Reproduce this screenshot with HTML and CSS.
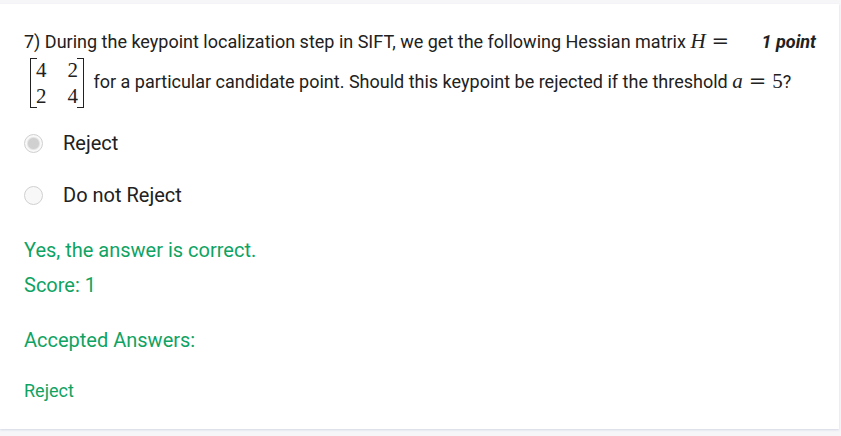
FILE: index.html
```html
<!DOCTYPE html>
<html lang="en">
<head>
<meta charset="utf-8">
<title>Assessment question</title>
<link rel="stylesheet" href="styles.css">
</head>
<body>
<main class="card">
  <form>
    <fieldset class="question">
      <legend class="prompt">
        <span class="points">1 point</span>
        7) During the keypoint localization step in SIFT, we get the following Hessian matrix <span class="math"><i>H</i><span class="equals">=</span></span><br>
        <span class="matrix"><span>4</span><span>2</span><span>2</span><span>4</span></span>
        <span>for a particular candidate point. Should this keypoint be rejected if the threshold <span class="math"><i>a</i><span class="equals">=</span>5</span>?</span>
      </legend>
      <label class="choice"><input type="radio" name="answer" checked disabled><span>Reject</span></label>
      <label class="choice"><input type="radio" name="answer" disabled><span>Do not Reject</span></label>
    </fieldset>
  </form>
  <section class="feedback">
    <p>Yes, the answer is correct.</p>
    <p>Score: 1</p>
    <h2>Accepted Answers:</h2>
    <p class="accepted">Reject</p>
  </section>
</main>
</body>
</html>
```
FILE: styles.css
```css
* {
  box-sizing: border-box;
}

body {
  margin: 0;
  padding: 4px 2px 6px 0;
  background: #f6f6f9;
  color: #212121;
  font-family: Roboto, sans-serif;
  font-size: 18px;
}

.card {
  padding: 22px 23px 21px 24px;
  background: #fff;
  box-shadow: 0 1px 2px #d5d8e4;
}

.question {
  margin: 0;
  padding: 0;
  border: 0;
  min-width: 0;
}

.prompt {
  width: 100%;
  padding: 0 0 9px;
  line-height: 32px;
}

.points {
  float: right;
  font-weight: 700;
  font-style: italic;
}

.math,
.matrix {
  font-family: "Liberation Serif", serif;
  font-size: 21px;
  line-height: 1;
}

.equals {
  margin: 0 6px;
  font-family: "DejaVu Serif", serif;
}

.matrix {
  display: inline-grid;
  grid-template-columns: auto auto;
  column-gap: 21px;
  row-gap: 2px;
  position: relative;
  margin-left: 6px;
  margin-right: 5px;
  padding: 0 6px;
  line-height: 24px;
  vertical-align: middle;
}

.matrix::before,
.matrix::after {
  content: "";
  position: absolute;
  top: 0;
  bottom: 0;
  width: 6px;
  border: 1px solid #212121;
}

.matrix::before {
  left: 0;
  border-right: 0;
}

.matrix::after {
  right: 0;
  border-left: 0;
}

.choice {
  display: flex;
  align-items: center;
  gap: 20px;
  height: 52px;
  font-size: 20px;
}

.choice input {
  appearance: none;
  width: 19px;
  height: 19px;
  margin: 0;
  border: 1px solid #d0d0d0;
  border-radius: 50%;
  background: #f8f8f8;
}

.choice input:checked {
  background: radial-gradient(circle, #d0d0d0 5px, #f8f8f8 7px);
}

.feedback {
  margin-top: 12px;
  color: #0fa363;
  font-size: 20px;
  line-height: 35px;
}

.feedback p {
  margin: 0;
}

.feedback h2 {
  margin: 20px 0 15px;
  font-size: 20px;
  font-weight: 400;
}

.feedback .accepted {
  font-size: 18px;
}
```
